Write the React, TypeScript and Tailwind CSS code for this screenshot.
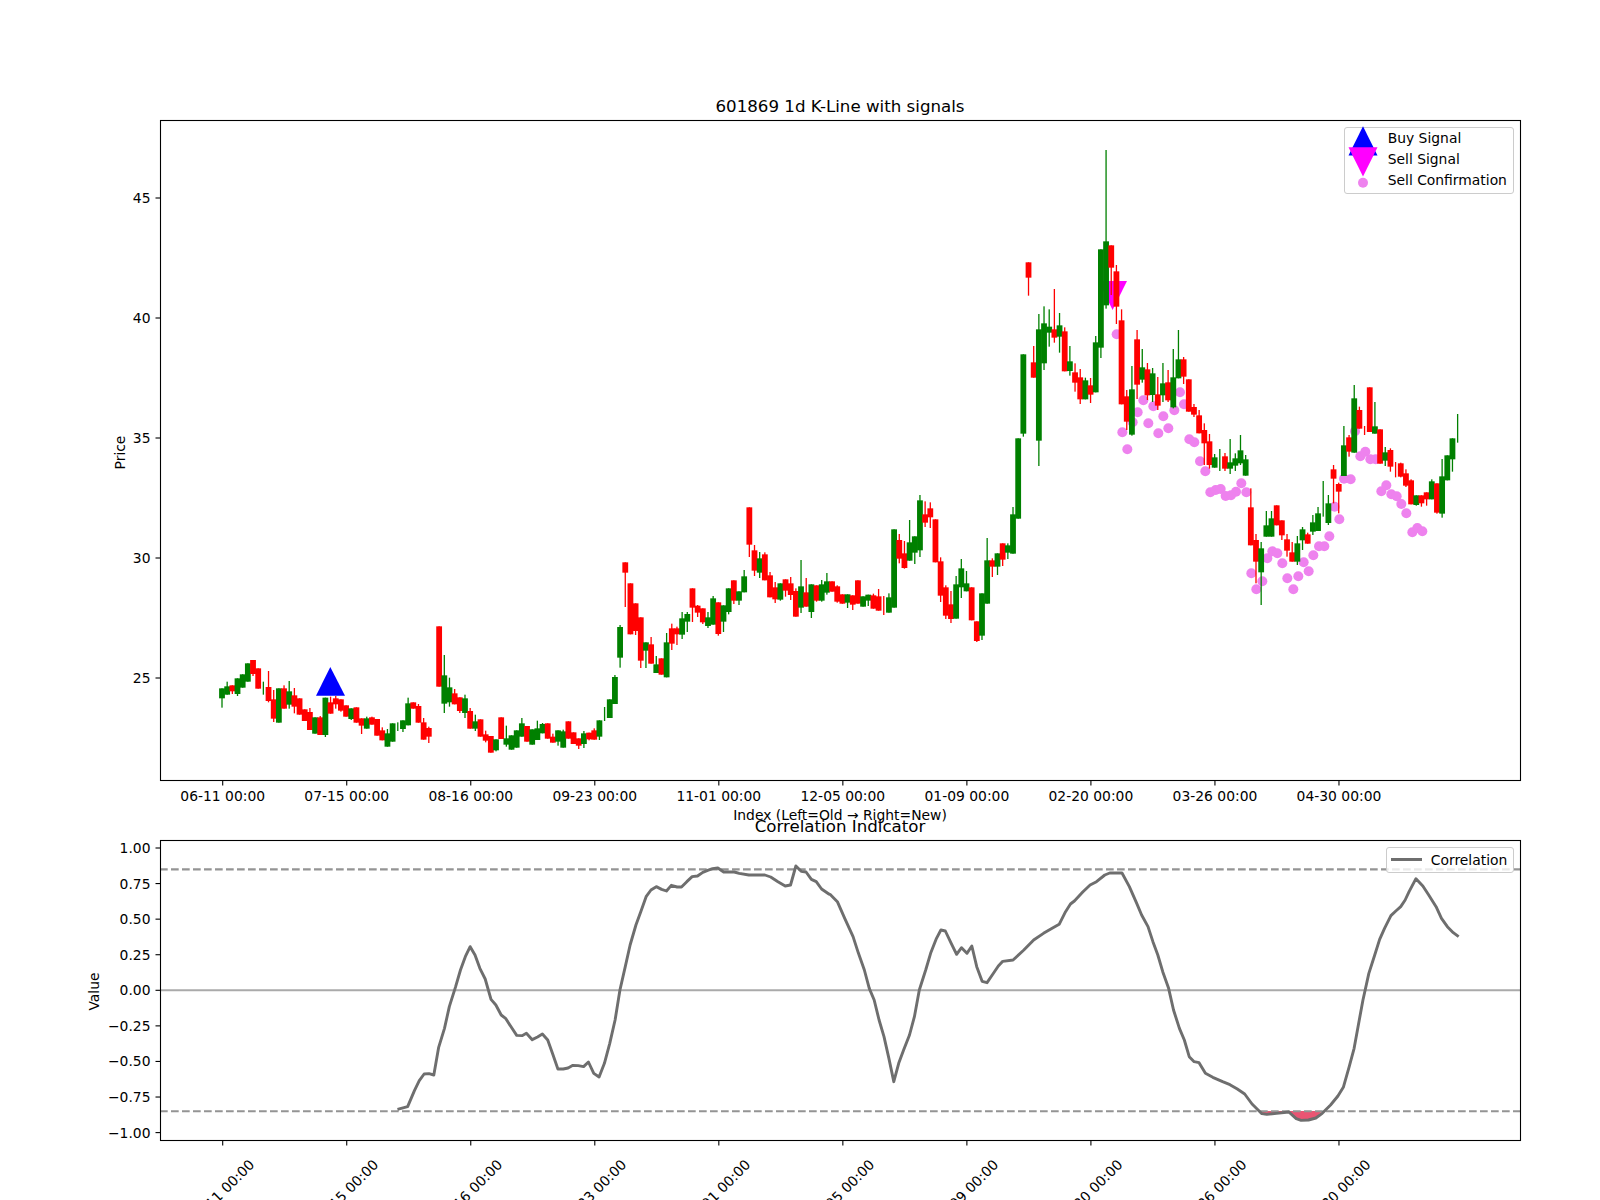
const DATE_LABELS = ["06-11", "07-15", "08-16", "09-23", "11-01", "12-05", "01-09", "02-20", "03-26", "04-30"];

const candleX = (i: number) => 222 + 5.17 * i;
const TICK_XS = DATE_LABELS.map((_, i) => 222.7 + 124.03 * i);
const PRICE_TICKS = [25, 30, 35, 40, 45];
const CORR_TICKS = [1, 0.75, 0.5, 0.25, 0, -0.25, -0.5, -0.75, -1];
const corrY = (v: number) => 990.3 - 142.3 * v;

type Candle = { up: boolean; high: number; top: number; bottom: number; low: number } | null;

// rows: colour, wick top, body top, body bottom, wick bottom (3x pixels from offset)
const parseRows = (offset: number, rows: string): Candle[] =>
  rows
    .trim()
    .split("\n")
    .map((row) => {
      const p = row.trim().split(" ");
      if (p[0] === "-") return null;
      const [high, top, bottom, low] = p.slice(1).map((n) => offset + Number(n) / 3);
      return { up: p[0] === "g", high, top, bottom, low };
    });

const CANDLES: Candle[] = [
  ...parseRows(560, `
g 385 385 415 443
g 365 379 404 404
r 376 376 394 402
g 355 355 402 408
g 343 343 383 383
g 310 310 365 365
r 300 300 342 348
r 325 325 386 386
g 365 365 365 404
r 333 381 423 427
r 390 418 476 486
g 385 385 488 488
r 376 385 446 446
g 363 394 434 446
r 384 406 440 460
r 415 415 464 464
r 448 448 483 483
r 444 456 510 510
g 472 472 521 521
r 468 472 525 525
g 413 413 525 531
r 410 427 461 461
r 408 415 433 446
r 418 418 452 455
r 436 436 470 470
g 445 445 477 480
r 442 442 488 488
r 475 475 497 522
g 470 475 506 506
r 470 472 494 494
r 477 477 527 527
r 502 511 541 541
g 507 520 560 560
g 490 490 545 545
g 487 487 487 513
g 481 481 507 516
g 413 430 496 496
r 427 427 446 446
r 432 438 488 488
r 474 487 539 539
r 500 504 530 549
-
r 199 199 380 380
g 285 346 431 459
g 353 382 427 440
r 387 400 433 433
r 412 412 453 459
g 404 415 459 474
r 444 453 506 506
g 464 484 506 513
r 478 478 530 530
r 512 523 542 547
r 528 528 578 578
g 538 538 571 574
r 472 472 537 537
g 497 535 554 560
g 526 526 569 569
g 511 511 563 563
g 474 490 530 530
r 498 498 545 545
g 508 508 554 554
g 482 505 540 540
g 489 492 520 520
r 490 490 536 536
r 521 530 548 548
g 511 511 545 557
g 509 514 563 563
r 484 484 536 536
r 517 517 552 552
r 535 535 557 567
g 513 520 552 564
r 518 518 538 541
r 505 511 539 539
g 481 481 530 540
g 441 441 441 483
g 418 418 474 474`),
  ...parseRows(460, `
g 645 651 732 732
g 495 501 593 623
r 307 307 338 441
r 370 370 523 523
r 430 430 513 525
r 472 472 602 624
g 547 547 572 624
r 531 553 611 611
g 588 613 639 639
r 595 595 644 644
g 519 547 652 652
r 491 505 551 570
r 500 505 523 555
g 456 475 524 537
g 456 462 485 516
r 385 385 443 486
r 435 437 458 471
r 445 445 487 492
g 456 472 498 504
g 408 415 494 494
r 427 427 522 527
g 436 436 485 516
g 385 385 456 463
r 361 361 422 432
g 394 394 422 435
g 330 349 397 397
r 142 142 254 291
r 255 271 332 348
g 276 295 338 354
r 277 283 361 361
r 336 346 412 412
r 366 382 418 429
g 370 370 419 422
r 358 358 392 410
r 351 370 405 420
r 385 393 470 470
g 300 379 443 459
r 354 397 440 440
g 373 373 456 474
r 376 376 422 425
g 360 373 422 425
g 339 364 398 404
r 364 364 395 395
r 376 379 425 428
r 403 403 431 431
g 403 403 428 444
r 406 406 434 450
r 361 361 431 431
g 409 409 440 440
g 404 404 422 438
r 401 406 446 446
r 387 409 452 452
r 408 408 408 465
g 400 412 458 458
g 208 208 443 443
r 222 240 296 310
r 243 280 324 326
g 180 247 302 302
g 229 229 278 312
g 105 121 271 291
r 124 163 188 201
r 127 145 172 204
r 178 178 307 307
r 292 304 407 426
r 376 382 467 477
r 393 433 477 489
g 348 373 476 476
g 297 325 382 414
g 333 370 394 394
r 382 382 481 481
r 484 484 543 546
g 400 400 527 540
g 234 301 431 431
r 295 301 320 351
g 280 280 320 345
r 250 250 299 318
g 250 256 278 297
g 141 163 281 281`),
  ...parseRows(130, `
g 925 925 1166 1166
g 673 673 911 920
r 397 397 443 497
r 648 697 743 743
g 552 598 932 1008
g 529 580 700 720
g 538 590 608 650
r 477 598 623 638
g 549 586 620 668
r 592 604 724 724
g 648 694 723 737
r 700 727 758 785
r 717 742 808 822
g 743 751 808 808
r 744 766 794 819
g 618 637 787 787
g 358 358 653 684
g 60 334 526 536
r 346 346 413 495
r 405 424 530 582
r 538 571 823 823
r 780 799 875 900
g 708 778 914 917
r 600 628 764 807
g 657 712 749 758
r 699 718 796 810
g 714 730 795 816
r 741 793 827 840
g 699 760 796 816
r 720 757 811 816
g 657 742 832 835
g 600 688 745 745`),
  ...parseRows(340, `
r 51 58 110 132
r 118 118 215 215
r 192 201 224 231
r 210 226 280 280
r 250 270 310 375
r 282 304 375 386
g 342 352 383 383
g 327 327 327 393
r 339 349 386 393
g 297 367 386 402
g 340 355 377 393
g 285 331 370 375
g 345 358 407 407
r 445 502 616 616
r 582 600 665 730
g 606 625 697 795
g 513 556 590 590
g 513 535 590 590
r 496 496 556 556
r 541 541 586 600
r 582 598 632 650
r 606 637 665 665
g 588 610 665 675
g 561 568 601 630
r 578 583 611 611
g 525 547 575 585
g 501 520 573 573
g 423 423 423 530
g 465 490 549 555
r 375 388 416 490
r 428 432 455 520
g 258 316 408 408
r 285 292 335 350
g 135 175 338 338
r 200 210 266 266
r 258 258 258 285
r 142 142 276 276
g 186 259 281 281
r 268 268 371 371
g 321 337 362 378
r 325 330 380 395
r 366 366 366 412
r 368 370 410 412
r 388 400 437 441
r 418 421 493 493
g 466 466 495 497
r 466 466 490 500
r 457 457 478 497
g 418 424 478 478
r 430 430 518 521
g 357 409 521 533
g 346 346 421 421
g 295 295 358 395
g 222 222 222 308`),
];

const DOTS: [number, number][] = [
  ...[[590, 613], [607, 907], [622, 958], [638, 877], [653, 847], [670, 811], [685, 880], [700, 829], [715, 910], [730, 859], [745, 895], [763, 841]].map(
    ([x, y]): [number, number] => [920 + x / 3, 130 + y / 3],
  ),
  ...[[0, 157], [12, 193], [28, 298], [43, 307], [60, 364], [76, 394], [91, 457], [107, 450], [122, 447], [137, 468], [153, 466], [168, 455], [184, 430], [199, 457], [214, 700], [229, 748], [247, 724], [262, 655], [277, 634], [292, 640], [307, 670], [322, 715], [340, 748], [355, 709], [371, 667], [386, 694], [400, 646], [417, 619], [433, 619], [448, 589], [464, 500], [478, 538], [492, 416], [512, 418], [525, 274], [541, 349], [556, 335], [571, 358], [587, 358], [604, 454], [619, 436], [634, 463], [650, 469], [664, 492], [679, 520], [697, 577], [712, 564], [727, 574]].map(
    ([x, y]): [number, number] => [1180 + x / 3, 340 + y / 3],
  ),
];

const corrLeft = [[655, 988], [676, 980], [690, 932], [700, 902], [710, 882], [720, 881], [730, 885], [740, 802], [752, 745], [762, 680], [775, 620], [785, 570], [795, 530], [805, 500], [815, 525], [825, 565], [836, 597], [848, 658], [858, 675], [869, 705], [878, 715], [890, 742], [901, 766], [912, 767], [921, 760], [933, 779], [944, 771], [954, 762], [965, 780], [976, 825], [986, 867], [997, 867], [1007, 864], [1017, 856], [1028, 857], [1039, 860], [1049, 846], [1060, 880], [1071, 891], [1082, 850], [1093, 790], [1104, 720], [1114, 630], [1125, 560], [1135, 495], [1147, 435], [1157, 395], [1168, 350], [1178, 330], [1189, 320], [1200, 328], [1210, 333], [1220, 316], [1232, 321], [1241, 321], [1252, 305], [1263, 290], [1274, 288], [1285, 277], [1295, 271], [1305, 266], [1316, 264], [1328, 276], [1340, 276], [1350, 276], [1360, 280], [1380, 285], [1395, 285], [1413, 285], [1425, 291], [1440, 305], [1455, 318], [1466, 315], [1477, 258], [1488, 274], [1498, 276], [1509, 298], [1519, 305], [1530, 327], [1545, 342]];
const corrRight = [[0, 343], [15, 365], [30, 415], [47, 470], [58, 520], [70, 570], [80, 625], [90, 660], [100, 720], [110, 770], [120, 835], [130, 905], [140, 850], [150, 810], [162, 765], [172, 710], [182, 630], [195, 570], [205, 520], [217, 475], [226, 450], [235, 453], [247, 490], [258, 523], [268, 503], [279, 520], [289, 498], [299, 560], [310, 604], [320, 608], [332, 582], [343, 558], [352, 544], [373, 540], [395, 510], [415, 480], [435, 460], [450, 447], [467, 433], [480, 395], [490, 372], [498, 363], [515, 336], [530, 315], [543, 305], [560, 285], [570, 279], [595, 279], [610, 320], [625, 370], [635, 405], [648, 440], [658, 485], [668, 525], [678, 575], [690, 625], [700, 690], [712, 745], [722, 780], [732, 830], [742, 845], [752, 848], [765, 880], [780, 892], [800, 905], [815, 914], [830, 927], [845, 942], [860, 972], [880, 1001], [890, 1003], [910, 1000], [935, 996], [950, 1016], [960, 1021], [975, 1020], [990, 1014], [1003, 1000], [1020, 975], [1035, 948], [1046, 922], [1058, 860], [1068, 805], [1076, 740], [1086, 660], [1098, 580], [1110, 525], [1120, 478], [1130, 445], [1143, 407], [1153, 393], [1163, 380], [1172, 360], [1180, 335], [1194, 296], [1208, 318], [1220, 345], [1235, 380], [1246, 415], [1258, 440], [1270, 458], [1281, 470]];

const toLeft = ([x, y]: number[]) => `${80 + x / 2.0632},${780 + y / 3}`;
const toRight = ([x, y]: number[]) => `${830 + x / 2.0377},${780 + y / 3}`;
const CORR_LINE = [...corrLeft.map(toLeft), ...corrRight.map(toRight)].join(" ");
const OVERSOLD_FILL = [[872, 993], [880, 1001], [890, 1003], [910, 1000], [935, 996], [950, 1016], [960, 1021], [975, 1020], [990, 1014], [1003, 993]].map(toRight).join(" ");

const Frame = ({ x, y, w, h }: { x: number; y: number; w: number; h: number }) => (
  <rect x={x + 0.5} y={y + 0.5} width={w} height={h} fill="none" stroke="#000" strokeWidth="1.1" />
);

const YTick = ({ y, label }: { y: number; label: string }) => (
  <g>
    <line x1="155.5" x2="160.5" y1={y} y2={y} stroke="#000" strokeWidth="1.1" />
    <text x="150.5" y={y + 5} textAnchor="end" className="text-[13.89px]">
      {label}
    </text>
  </g>
);

const PriceChart = () => (
  <svg viewBox="160 120 1360 660" className="block h-[660px] w-[1360px] overflow-visible">
    <polygon points="1098.3,281 1127,281 1112.6,310" fill="#ff00ff" />
    {DOTS.map(([x, y], i) => (
      <circle key={i} cx={x} cy={y} r="5" fill="#ee82ee" />
    ))}
    {CANDLES.map((c, i) => {
      if (!c) return null;
      const x = candleX(i);
      const color = c.up ? "#008000" : "#ff0000";
      return (
        <g key={i} fill={color}>
          <rect x={x - 0.65} y={c.high} width="1.3" height={c.low - c.high} />
          <rect x={x - 2.9} y={c.top} width="5.8" height={c.bottom - c.top} />
        </g>
      );
    })}
    <polygon points="330.3,667 316,695.7 345,695.7" fill="#0000ff" />
    <Frame x={160} y={120} w={1360} h={660} />
    {PRICE_TICKS.map((p) => (
      <YTick key={p} y={678 - (p - 25) * 24} label={String(p)} />
    ))}
    {TICK_XS.map((x, i) => (
      <g key={i}>
        <line x1={x} x2={x} y1="780" y2="785.5" stroke="#000" strokeWidth="1.1" />
        <text x={x} y="801" textAnchor="middle" className="text-[13.89px]">
          {DATE_LABELS[i]} 00:00
        </text>
      </g>
    ))}
    <text x="840" y="819.5" textAnchor="middle" className="text-[13.89px]">
      Index (Left=Old → Right=New)
    </text>
    <text x="124.5" y="452.5" textAnchor="middle" transform="rotate(-90 124.5 452.5)" className="text-[13.89px]">
      Price
    </text>
  </svg>
);

const CorrelationChart = () => (
  <svg viewBox="160 840 1360 300" className="block h-[300px] w-[1360px] overflow-visible">
    <polygon points={OVERSOLD_FILL} fill="#ea5573" />
    <line x1="160" x2="1520" y1={corrY(0)} y2={corrY(0)} stroke="#aaaaaa" strokeWidth="2" />
    <line x1="160" x2="1520" y1={corrY(0.85)} y2={corrY(0.85)} stroke="#949494" strokeWidth="2.1" strokeDasharray="7.7 3.3" />
    <line x1="160" x2="1520" y1={corrY(-0.85)} y2={corrY(-0.85)} stroke="#949494" strokeWidth="2.1" strokeDasharray="7.7 3.3" />
    <polyline points={CORR_LINE} fill="none" stroke="#6e6e6e" strokeWidth="2.9" strokeLinejoin="round" />
    <Frame x={160} y={840} w={1360} h={300} />
    {CORR_TICKS.map((v) => (
      <YTick key={v} y={corrY(v)} label={`${v < 0 ? "−" : ""}${Math.abs(v).toFixed(2)}`} />
    ))}
    {TICK_XS.map((x, i) => (
      <g key={i}>
        <line x1={x} x2={x} y1="1140" y2="1145.5" stroke="#000" strokeWidth="1.1" />
        <text x={x - 1} y="1197" textAnchor="middle" transform={`rotate(-45 ${x - 1} 1192)`} className="text-[13.89px]">
          {DATE_LABELS[i]} 00:00
        </text>
      </g>
    ))}
    <text x="99" y="991.5" textAnchor="middle" transform="rotate(-90 99 991.5)" className="text-[13.89px]">
      Value
    </text>
  </svg>
);

const SignalLegend = () => (
  <div className="absolute left-[1183.7px] top-[7.3px] h-[67px] w-[170px] rounded-[3px] border border-[#cccccc] bg-white/80 text-[13.89px]">
    <div className="flex h-[21px] items-center gap-[13px] pl-[6px]">
      <svg viewBox="0 0 24 21" className="h-[21px] w-[24px] overflow-visible">
        <polygon points="12,-1.8 -2.5,27.5 26.5,27.5" fill="#0000ff" />
      </svg>
      <span>Buy Signal</span>
    </div>
    <div className="flex h-[21px] items-center gap-[13px] pl-[6px]">
      <svg viewBox="0 0 24 21" className="h-[21px] w-[24px] overflow-visible">
        <polygon points="-2.5,-1.8 26.5,-1.8 12,27.5" fill="#ff00ff" />
      </svg>
      <span>Sell Signal</span>
    </div>
    <div className="flex h-[21px] items-center gap-[13px] pl-[6px]">
      <svg viewBox="0 0 24 21" className="h-[21px] w-[24px] overflow-visible">
        <circle cx="12" cy="12.8" r="5" fill="#ee82ee" />
      </svg>
      <span>Sell Confirmation</span>
    </div>
  </div>
);

const CorrelationLegend = () => (
  <div className="absolute left-[1225.5px] top-[7.3px] flex h-[25.4px] w-[128px] items-center gap-[8.7px] rounded-[3px] border border-[#cccccc] bg-white/80 pl-[4px] text-[13.89px]">
    <div className="h-[3px] w-[31.6px] bg-[#6e6e6e]" />
    <span>Correlation</span>
  </div>
);

export default function App() {
  return (
    <div className="h-[1200px] w-[1600px] overflow-hidden bg-white pt-[97px] font-['DejaVu_Sans',sans-serif] text-black">
      <h1 className="ml-[160px] h-[23px] w-[1360px] text-center text-[16.67px] leading-[20px]">601869 1d K-Line with signals</h1>
      <div className="relative ml-[160px] h-[660px] w-[1360px]">
        <PriceChart />
        <SignalLegend />
      </div>
      <h2 className="ml-[160px] h-[60px] w-[1360px] pt-[37px] text-center text-[16.67px] leading-[20px]">Correlation Indicator</h2>
      <div className="relative ml-[160px] h-[300px] w-[1360px]">
        <CorrelationChart />
        <CorrelationLegend />
      </div>
    </div>
  );
}
